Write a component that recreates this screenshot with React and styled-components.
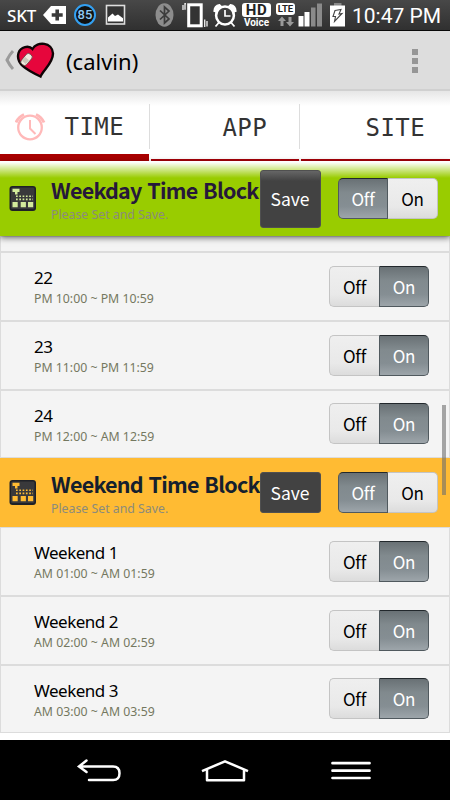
import React, { useState } from "react";
import styled, { createGlobalStyle, css } from "styled-components";

const hours = [
  { name: "22", range: "PM 10:00 ~ PM 10:59" },
  { name: "23", range: "PM 11:00 ~ PM 11:59" },
  { name: "24", range: "PM 12:00 ~ AM 12:59" },
];

const weekends = [
  { name: "Weekend 1", range: "AM 01:00 ~ AM 01:59" },
  { name: "Weekend 2", range: "AM 02:00 ~ AM 02:59" },
  { name: "Weekend 3", range: "AM 03:00 ~ AM 03:59" },
];

function Switch({ initial }) {
  const [value, setvalue] = useState(initial);
  return (
    <Toggle>
      <Half $left $pressed={value === "off"} onClick={() => setvalue("off")}>
        Off
      </Half>
      <Half $pressed={value === "on"} onClick={() => setvalue("on")}>
        On
      </Half>
    </Toggle>
  );
}

function Hour({ name, range }) {
  return (
    <Row>
      <RowText>
        <RowName>{name}</RowName>
        <RowRange>{range}</RowRange>
      </RowText>
      <Switch initial='on' />
    </Row>
  );
}

function BoardIcon({ hole }) {
  return (
    <Icon width='28' height='27' viewBox='0 0 28 27'>
      <rect x='.5' y='1' width='26.500' height='25' rx='3' fill='#1f2126' />
      <rect x='2' y='2.500' width='23.500' height='21.500' rx='1.500' fill='#39393b' />
      <path d='M3.500 3.800h7v3.200h-2v2.500h-2.500v-2.500h-2.500z' fill={hole} />
      <path d='M3.500 17h5.200v5.200h-5.200zM11.700 17h5.200v5.200h-5.200zM19 17h5.200v5.200h-5.200z' fill={hole} />
      <path
        d='M7 11.200h17M7 14.400h17'
        stroke={hole}
        strokeWidth='1.600'
        strokeDasharray='1.700 1.600'
      />
    </Icon>
  );
}

function Block({ title, color, hole, tall }) {
  return (
    <BlockBar $color={color} $tall={tall}>
      <BoardIcon hole={hole} />
      <BlockText>
        <BlockTitle $tint={tall ? "#26183a" : "#15202e"}>{title}</BlockTitle>
        <BlockHint>Please Set and Save.</BlockHint>
      </BlockText>
      <SaveButton $tall={tall}>Save</SaveButton>
      <Switch initial='off' />
    </BlockBar>
  );
}

function Status() {
  return (
    <StatusBar>
      <Carrier>SKT</Carrier>
      <Icon width='24' height='20' viewBox='0 0 24 20'>
        <path d='M0 10 8 1h15v18H8z' fill='#fff' />
        <path d='M14.200 4.500v11M8.700 10h11' stroke='#3a3a3a' strokeWidth='3.600' />
      </Icon>
      <Percent>85</Percent>
      <Icon $gap='9px' width='21' height='22' viewBox='0 0 21 22'>
        <rect x='1.500' y='1.500' width='18' height='18.500' fill='#333' stroke='#ddd' strokeWidth='1.600' />
        <path d='M3 17.500v-4l4.500-4 2.500 2.500 3-1.500 5 3.800v3.200z' fill='#fff' />
      </Icon>
      <Icon $gap='29px' width='19' height='24' viewBox='0 0 19 24'>
        <ellipse cx='9.500' cy='12' rx='9' ry='11.700' fill='#8d8d8d' />
        <path d='m5 7.500 9 8.500-4.500 4V4l4.500 4L5 16.500' fill='none' stroke='#3c3c3c' strokeWidth='1.700' />
      </Icon>
      <Icon $gap='8px' width='26' height='25' viewBox='0 0 26 25'>
        <rect x='6.700' y='1.800' width='12.500' height='21' fill='#333' stroke='#fff' strokeWidth='3' />
        <path d='M4 .8H3v6M1 2v5M22.700 16.500v7.500M25 18v5.500' fill='none' stroke='#e6e6e6' strokeWidth='1.400' />
      </Icon>
      <Icon $gap='5px' width='24' height='25' viewBox='0 0 24 25'>
        <circle cx='12' cy='12.500' r='8.900' fill='none' stroke='#fff' strokeWidth='2.500' />
        <path d='M12 7v6h5.500' fill='none' stroke='#fff' strokeWidth='1.700' />
        <path d='M1.300 8Q1.500 3 6.500 2L8 3.500 3 8.500zM22.700 8Q22.500 3 17.500 2L16 3.500l5 5zM6 19.500l-3.500 4M18 19.500l3.500 4' fill='#fff' stroke='#fff' strokeWidth='1.800' />
      </Icon>
      <Stack $gap='5px' $width='29px'>
        <Badge $size='15px' $height='14px' $wide>
          HD
        </Badge>
        <Voice>Voice</Voice>
      </Stack>
      <Stack $gap='5px' $width='19px'>
        <Badge $size='9.500px' $height='12px'>LTE</Badge>
        <Icon width='16' height='11' viewBox='0 0 16 11'>
          <path d='M4 .5 8 5H5.500v5h-3V5H0zM12 10.500 16 6h-2.500V1h-3v5H8z' fill='#999' />
        </Icon>
      </Stack>
      <Icon $gap='3px' width='25' height='24' viewBox='0 0 25 24'>
        <path d='M.5 13h5v10.500h-5zM6.500 9h5v14.500h-5z' fill='#fff' />
        <path d='M13 4.500h4.500v19H13zM19 .5h5v23h-5z' fill='#8a8a8a' />
      </Icon>
      <Icon $gap='7px' width='15' height='24' viewBox='0 0 15 24'>
        <path d='M4 0h7.500v3H4z' fill='#888' />
        <path d='M0 2.500h15v21H0z' fill='#fff' />
        <path d='m5 7.500 6-1-2 4.500 3-.5-7.500 8 1-5H3z' fill='#fff' stroke='#444' strokeWidth='1.100' />
      </Icon>
      <Clock>10:47 PM</Clock>
    </StatusBar>
  );
}

export default function App() {
  return (
    <>
      <Global />
      <Screen>
        <Status />
        <ActionBar>
          <Icon $gap='5px' width='10' height='22' viewBox='0 0 10 22'>
            <path d='M8 2Q5 5 2 11q3 6 6 9' fill='none' stroke='#9b9b9b' strokeWidth='3' />
          </Icon>
          <Icon $gap='1px' width='39' height='38' viewBox='0 0 39 38'>
            <path
              d='M16.500 8C13 4 4.500 5.500 2.500 12-.5 22.500 10 28.500 24.500 35.500 27 29 37 22.500 37 12.500 36.500 1 21 0 16.500 8z'
              fill='#e6063c'
              stroke='#100406'
              strokeWidth='2.400'
            />
            <rect x='-6.500' y='-3.400' width='13' height='6.800' rx='2.800' fill='#f2e9df' stroke='#59463f' strokeWidth='.7' transform='translate(10.500 18.500) rotate(-50)' />
            <rect x='-2.500' y='-2.500' width='5' height='5' fill='#cbc7b8' transform='translate(9.500 19.500) rotate(-50)' />
          </Icon>
          <Account>(calvin)</Account>
          <Dots>
            <i />
            <i />
            <i />
          </Dots>
        </ActionBar>
        <Tabs>
          <Tab $active $end='25px'>
            <Icon width='31' height='29' viewBox='0 0 31 29'>
              <circle cx='15' cy='14.500' r='11.800' fill='none' stroke='#ffb9b9' strokeWidth='2.300' />
              <path d='M15 7v8.500l5.500 5.500' fill='none' stroke='#ffb9b9' strokeWidth='2' />
              <path d='M1 9.500Q3.500 4 9 1.500M29 9.500Q26.500 4 21 1.500' fill='none' stroke='#ffb9b9' strokeWidth='3' />
            </Icon>
            <TabLabel>TIME</TabLabel>
          </Tab>
          <Tab $end='32px'>
            <TabLabel>APP</TabLabel>
          </Tab>
          <Tab $end='25px'>
            <TabLabel>SITE</TabLabel>
          </Tab>
        </Tabs>
        <List>
          <Block title='Weekday Time Block' color='#99cc00' hole='#d3ea9c' tall />
          <CutRow />
          {hours.map((h) => (
            <Hour key={h.name} {...h} />
          ))}
          <Block title='Weekend Time Block' color='#ffbb33' hole='#ffbb33' />
          {weekends.map((h) => (
            <Hour key={h.name} {...h} />
          ))}
          <ScrollThumb />
        </List>
        <NavBar>
          <Icon width='46' height='26' viewBox='0 0 46 26'>
            <path d='M10.500 2.500 3 8.500l7.500 5.500M3.500 8.500h33.500q6.500 0 6.500 6.800T37 22H13' fill='none' stroke='#fff' strokeWidth='2.500' strokeLinecap='round' />
          </Icon>
          <Icon width='50' height='26' viewBox='0 0 50 26'>
            <path d='M2 13.200 25 3.300l23 9.900M7 12v10.300h37V12' fill='none' stroke='#fff' strokeWidth='2.500' strokeLinejoin='round' />
          </Icon>
          <Icon $gap='4px' width='40' height='26' viewBox='0 0 40 26'>
            <path d='M1.500 5.200h37M1.500 12.700h37M1.500 20h37' stroke='#fff' strokeWidth='2.700' strokeLinecap='round' />
          </Icon>
        </NavBar>
      </Screen>
    </>
  );
}

const Global = createGlobalStyle`
  body {
    margin: 0;
    background: #000;
  }
  * {
    box-sizing: border-box;
  }
`;

const Screen = styled.div`
  width: 450px;
  height: 800px;
  display: flex;
  flex-direction: column;
  overflow: hidden;
  background: #fff;
  color: #000;
  font-family: "Noto Sans CJK KR", "Noto Sans", sans-serif;
  font-variant-ligatures: none;
`;

const Icon = styled.svg`
  display: block;
  flex: none;
  margin-left: ${(props) => props.$gap || 0};
`;

const StatusBar = styled.div`
  height: 31px;
  flex: none;
  display: flex;
  align-items: center;
  padding-left: 7px;
  background: linear-gradient(#484848, #303030);
  border-bottom: 1px solid #080808;
  color: #fff;
  white-space: nowrap;
`;

const Carrier = styled.div`
  width: 36px;
  padding-top: 2px;
  font: 500 17px/28px "Noto Sans", sans-serif;
  letter-spacing: -0.2px;
`;

const Percent = styled.div`
  width: 22px;
  height: 22px;
  margin-left: 7px;
  flex: none;
  border: 2px solid #33a0f2;
  border-radius: 50%;
  background: #111;
  color: #8ec9f5;
  text-align: center;
  font: 500 13px/18px Roboto, sans-serif;
`;

const Stack = styled.div`
  width: ${(props) => props.$width};
  margin-left: ${(props) => props.$gap};
  height: 24px;
  flex: none;
  display: flex;
  flex-direction: column;
  align-items: center;
  justify-content: space-between;
`;

const Badge = styled.div`
  width: 100%;
  height: ${(props) => props.$height};
  border-radius: 3px;
  background: #fff;
  color: #222;
  text-align: center;
  font: bold ${(props) => props.$size} / ${(props) => props.$height} Roboto, sans-serif;
  ${(props) =>
    props.$wide &&
    css`
      line-height: 15px;
      letter-spacing: 0.5px;
    `}
`;

const Voice = styled.div`
  font: bold 10px/9px Roboto, sans-serif;
`;

const Clock = styled.div`
  margin-left: 7px;
  padding-top: 2px;
  font: 21px/28px Roboto, sans-serif;
`;

const ActionBar = styled.div`
  height: 60px;
  flex: none;
  display: flex;
  align-items: center;
  background: #ddd;
  border-bottom: 2px solid #d0d0d0;
`;

const Account = styled.div`
  flex: 1;
  margin-left: 11px;
  padding-top: 2px;
  font: 22px/30px "Noto Sans", sans-serif;
`;

const Dots = styled.div`
  width: 6px;
  margin-right: 32px;
  padding-top: 2px;
  display: grid;
  gap: 3px;
  i {
    height: 6px;
    background: #969696;
  }
`;

const Tabs = styled.div`
  height: 70px;
  flex: none;
  display: grid;
  grid-template-columns: 149px 148px 1fr;
  column-gap: 2px;
  background: linear-gradient(#ddd, #ddd) 149px 13px / 1px 45px no-repeat,
    linear-gradient(#ddd, #ddd) 299px 13px / 1px 45px no-repeat,
    linear-gradient(#e6e6e6, #fff 15px);
`;

const Tab = styled.div`
  display: flex;
  align-items: center;
  padding: 5px ${(props) => props.$end} 0 15px;
  border-bottom: 2px solid #a90008;
  ${(props) =>
    props.$active &&
    css`
      padding-top: 9px;
      border-bottom: 7px solid #a90000;
    `}
`;

const TabLabel = styled.div`
  margin-left: auto;
  color: #333;
  font: 24px/30px "DejaVu Sans Mono", monospace;
  letter-spacing: 0.4px;
`;

const List = styled.div`
  position: relative;
  height: 579px;
  flex: none;
`;

const BlockBar = styled.div`
  height: 68.75px;
  display: flex;
  align-items: center;
  padding: 0 12px 0 9px;
  background: ${(props) => props.$color};
  ${(props) =>
    props.$tall &&
    css`
      position: relative;
      height: 75px;
      background: linear-gradient(#fff 1px, rgba(255, 255, 255, 0) 17px) ${props.$color};
      box-shadow: 0 2px 6px rgba(0, 0, 0, 0.55);
    `}
`;

const BlockText = styled.div`
  width: 209px;
  margin-left: 14px;
  padding-top: 2px;
  white-space: nowrap;
`;

const BlockTitle = styled.div`
  color: ${(props) => props.$tint};
  font-weight: bold;
  font-size: 21.5px;
  line-height: 26px;
  letter-spacing: -0.75px;
  word-spacing: 1.5px;
`;

const BlockHint = styled.div`
  padding-top: 4px;
  color: #8b8b7c;
  font: 12.3px/16px "Noto Sans", sans-serif;
`;

const SaveButton = styled.button`
  width: 61px;
  height: ${(props) => (props.$tall ? "58px" : "41px")};
  margin-right: 17px;
  flex: none;
  padding: 0 1px 0 0;
  border: 1px solid #505050;
  border-radius: 3px;
  background: ${(props) => (props.$tall ? "linear-gradient(#666, #424242 10px)" : "#424242")};
  color: #fff;
  font: 17.5px "Noto Sans CJK KR", sans-serif;
`;

const Toggle = styled.div`
  width: 100px;
  height: 41px;
  flex: none;
  display: grid;
  grid-template-columns: 1fr 1fr;
`;

const Half = styled.button`
  padding: 0;
  border: 1px solid #c4c4c4;
  border-width: ${(props) => (props.$left ? "1px 0 1px 1px" : "1px 1px 1px 0")};
  border-radius: ${(props) => (props.$left ? "5px 0 0 5px" : "0 5px 5px 0")};
  background: linear-gradient(#efefef, #e9e9e9 70%, #dcdcdc);
  color: #000;
  font: 17px "Noto Sans CJK KR", sans-serif;
  font-variant-ligatures: none;
  letter-spacing: -0.2px;
  ${(props) =>
    props.$pressed &&
    css`
      border: 1px solid #50595e;
      border-top-color: #22282c;
      background: linear-gradient(#697175, #818a8e 35%, #858e93 70%, #9da5aa);
      color: #fff;
    `}
`;

const Row = styled.div`
  height: 68.75px;
  display: flex;
  align-items: center;
  justify-content: space-between;
  padding: 0 20px 0 33px;
  border: 1px solid #dcdcdc;
  background: #f4f4f4;
`;

const CutRow = styled(Row)`
  height: 16px;
`;

const RowText = styled.div`
  padding-top: 2px;
  white-space: nowrap;
`;

const RowName = styled.div`
  font: 17px/22px "Noto Sans", sans-serif;
  letter-spacing: -0.5px;
`;

const RowRange = styled.div`
  padding-top: 1px;
  color: #747860;
  font: 12.3px/17px "Noto Sans", sans-serif;
`;

const ScrollThumb = styled.div`
  position: absolute;
  top: 244px;
  right: 4px;
  width: 4px;
  height: 90px;
  background: rgba(110, 110, 110, 0.6);
`;

const NavBar = styled.div`
  height: 60px;
  flex: none;
  display: flex;
  justify-content: space-between;
  padding: 18px 79px 0 76px;
  background: #000;
`;
